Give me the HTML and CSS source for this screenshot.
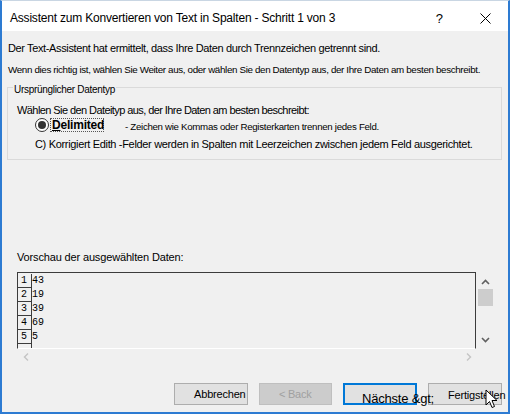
FILE: index.html
```html
<!DOCTYPE html>
<html lang="de">
<head>
    <meta charset="UTF-8">
    <title>Textkonvertierungs-Assistent</title>
    <link rel="stylesheet" href="styles.css">
</head>
<body>
    <div class="window">
        <div class="titlebar">
            <span class="title">Assistent zum Konvertieren von Text in Spalten - Schritt 1 von 3</span>
            <span class="help">?</span>
            <svg class="close" width="11" height="11" viewBox="0 0 11 11">
                <path d="M0.5 0.5 L10.5 10.5 M10.5 0.5 L0.5 10.5" stroke="#000" stroke-width="1" fill="none"/>
            </svg>
        </div>

        <div class="body">
            <p class="info">Der Text-Assistent hat ermittelt, dass Ihre Daten durch Trennzeichen getrennt sind.</p>
            <p class="hint">Wenn dies richtig ist, wählen Sie Weiter aus, oder wählen Sie den Datentyp aus, der Ihre Daten am besten beschreibt.</p>

            <fieldset class="group">
                <legend>Ursprünglicher Datentyp</legend>
                <p class="choose">Wählen Sie den Dateityp aus, der Ihre Daten am besten beschreibt:</p>
                <div class="option">
                    <span class="radio"><span class="dot"></span></span>
                    <span class="focus"><u>D</u>elimited</span>
                    <span class="desc">- Zeichen wie Kommas oder Registerkarten trennen jedes Feld.</span>
                </div>
                <p class="fixed">C) Korrigiert Edith -Felder werden in Spalten mit Leerzeichen zwischen jedem Feld ausgerichtet.</p>
            </fieldset>

            <p class="preview-label">Vorschau der ausgewählten Daten:</p>

            <div class="preview">
                <div class="grid">
                    <div class="row"><span class="num">1</span><span class="val">43</span></div>
                    <div class="row"><span class="num">2</span><span class="val">19</span></div>
                    <div class="row"><span class="num">3</span><span class="val">39</span></div>
                    <div class="row"><span class="num">4</span><span class="val">69</span></div>
                    <div class="row"><span class="num">5</span><span class="val">5</span></div>
                    <div class="row"><span class="num"></span><span class="val"></span></div>
                </div>
                <div class="vscroll">
                    <svg width="9" height="6" viewBox="0 0 9 6"><path d="M1 5 L4.5 1.5 L8 5" stroke="#606060" stroke-width="1.6" fill="none"/></svg>
                    <div class="thumb"></div>
                    <svg class="down" width="9" height="6" viewBox="0 0 9 6"><path d="M1 1 L4.5 4.5 L8 1" stroke="#606060" stroke-width="1.6" fill="none"/></svg>
                </div>
            </div>
            <div class="hscroll">
                <svg width="6" height="8" viewBox="0 0 6 8"><path d="M5 0.5 L1.5 4 L5 7.5" stroke="#c4c4c4" stroke-width="1.4" fill="none"/></svg>
                <svg width="6" height="8" viewBox="0 0 6 8"><path d="M1 0.5 L4.5 4 L1 7.5" stroke="#c4c4c4" stroke-width="1.4" fill="none"/></svg>
            </div>

            <div class="buttons">
                <div class="btn cancel">Abbrechen</div>
                <div class="btn back">&lt; Back</div>
                <div class="btn next">Nächste &amp;gt;</div>
                <div class="btn finish">Fertigstellen</div>
                <svg class="cursor" width="14" height="21" viewBox="0 0 14 21">
                    <path d="M1 1 L1 16 L4.5 12.5 L7 18.5 L9.5 17.5 L7 11.5 L12 11.5 Z" fill="#fff" stroke="#000" stroke-width="1" stroke-linejoin="round"/>
                </svg>
            </div>
        </div>
    </div>
</body>
</html>
```

FILE: styles.css
```css
* {
    margin: 0;
    padding: 0;
    box-sizing: border-box;
}

body {
    width: 510px;
    height: 415px;
    font-family: "Liberation Sans", Arial, sans-serif;
    color: #000;
    background: #fff;
}

.window {
    width: 510px;
    height: 414px;
    border: 2px solid #2d7bd2;
    border-top: 1px solid #c9d6e3;
    background: #f0f0f0;
    display: flex;
    flex-direction: column;
}

/* title bar */
.titlebar {
    height: 30px;
    flex: none;
    background: #fff;
    display: flex;
    align-items: center;
    padding: 4px 0 0 8px;
}

.title {
    font-size: 12px;
    letter-spacing: -0.2px;
}

.help {
    margin-left: auto;
    font-size: 13px;
}

.close {
    margin: 0 17px 0 37px;
}

/* content */
.body {
    flex: 1;
    padding: 0 6px;
    display: flex;
    flex-direction: column;
}

.info {
    font-size: 11px;
    line-height: 13px;
    letter-spacing: -0.37px;
    margin-top: 11px;
}

.hint {
    font-size: 9.8px;
    line-height: 12px;
    letter-spacing: -0.35px;
    margin-top: 9px;
}

.group {
    margin: 3px 0 0 -1px;
    width: 495px;
    height: 81px;
    border: 1px solid #dadada;
    padding: 0 0 0 9px;
}

.group legend {
    font-size: 10px;
    letter-spacing: -0.3px;
    line-height: 12px;
    padding: 5px 1px 0;
    margin-left: -4px;
}

.choose {
    font-size: 11px;
    line-height: 13px;
    letter-spacing: -0.58px;
    margin-top: 8px;
}

.option {
    display: flex;
    align-items: center;
    margin-left: 18px;
    height: 16px;
}

.radio {
    width: 14px;
    height: 14px;
    border: 1px solid #333;
    border-radius: 50%;
    background: #fff;
    display: flex;
    align-items: center;
    justify-content: center;
}

.dot {
    width: 8px;
    height: 8px;
    border-radius: 50%;
    background: #333;
}

.focus {
    margin-left: 1px;
    width: 54px;
    height: 14px;
    font-size: 12px;
    font-weight: bold;
    letter-spacing: -0.2px;
    padding-left: 1px;
    border: 1px dotted #555;
    line-height: 12px;
}

.desc {
    margin-left: 21px;
    font-size: 9.7px;
    letter-spacing: -0.3px;
    padding-top: 3px;
}

.fixed {
    font-size: 11px;
    line-height: 14px;
    letter-spacing: -0.33px;
    margin: 4px 0 0 18px;
}

.preview-label {
    font-size: 11px;
    line-height: 13px;
    letter-spacing: -0.15px;
    margin: 91px 0 0 9px;
}

/* data preview */
.preview {
    display: flex;
    margin: 8px 0 0 9px;
    height: 77px;
}

.grid {
    width: 459px;
    height: 77px;
    padding-top: 1px;
    border-top: 1px solid #3c3c3c;
    border-left: 1px solid #3c3c3c;
    border-right: 1px solid #3c3c3c;
    border-bottom: 1px solid #fff;
    overflow: hidden;
}

.row {
    display: flex;
    height: 14px;
    font-family: "Liberation Mono", "Courier New", monospace;
    font-size: 10px;
    line-height: 14px;
}

.num {
    width: 14px;
    border-right: 1px solid #3c3c3c;
    border-bottom: 1px solid #3c3c3c;
    padding-left: 3px;
}

.vscroll {
    width: 17px;
    margin-left: 1px;
    display: flex;
    flex-direction: column;
    align-items: center;
    padding-top: 7px;
}

.thumb {
    width: 15px;
    height: 17px;
    background: #cdcdcd;
    margin-top: 4px;
}

.vscroll .down {
    margin-top: auto;
    margin-bottom: 6px;
}

.hscroll {
    display: flex;
    justify-content: space-between;
    width: 449px;
    margin: 4px 0 0 15px;
    height: 8px;
}

/* dialog buttons */
.buttons {
    display: flex;
    gap: 11px;
    margin: 22px 0 0 166px;
    position: relative;
}

.btn {
    width: 74px;
    height: 22px;
    border: 1px solid #adadad;
    background: #e1e1e1;
    font-size: 11px;
    line-height: 20px;
    letter-spacing: -0.2px;
    white-space: nowrap;
}

.cancel {
    text-align: right;
    padding-right: 1px;
}

.back {
    background: #cccccc;
    border-color: #bfbfbf;
    color: #a0a0a0;
    text-align: center;
}

/* default button: its label spills past the right edge */
.next {
    position: relative;
    z-index: 1;
    border: 2px solid #0078d7;
    font-size: 13px;
    line-height: 15px;
    padding: 6px 0 0 17px;
}

.finish {
    padding: 1px 0 0 19px;
}

.cursor {
    position: absolute;
    z-index: 2;
    left: 311px;
    top: 6px;
}
```
